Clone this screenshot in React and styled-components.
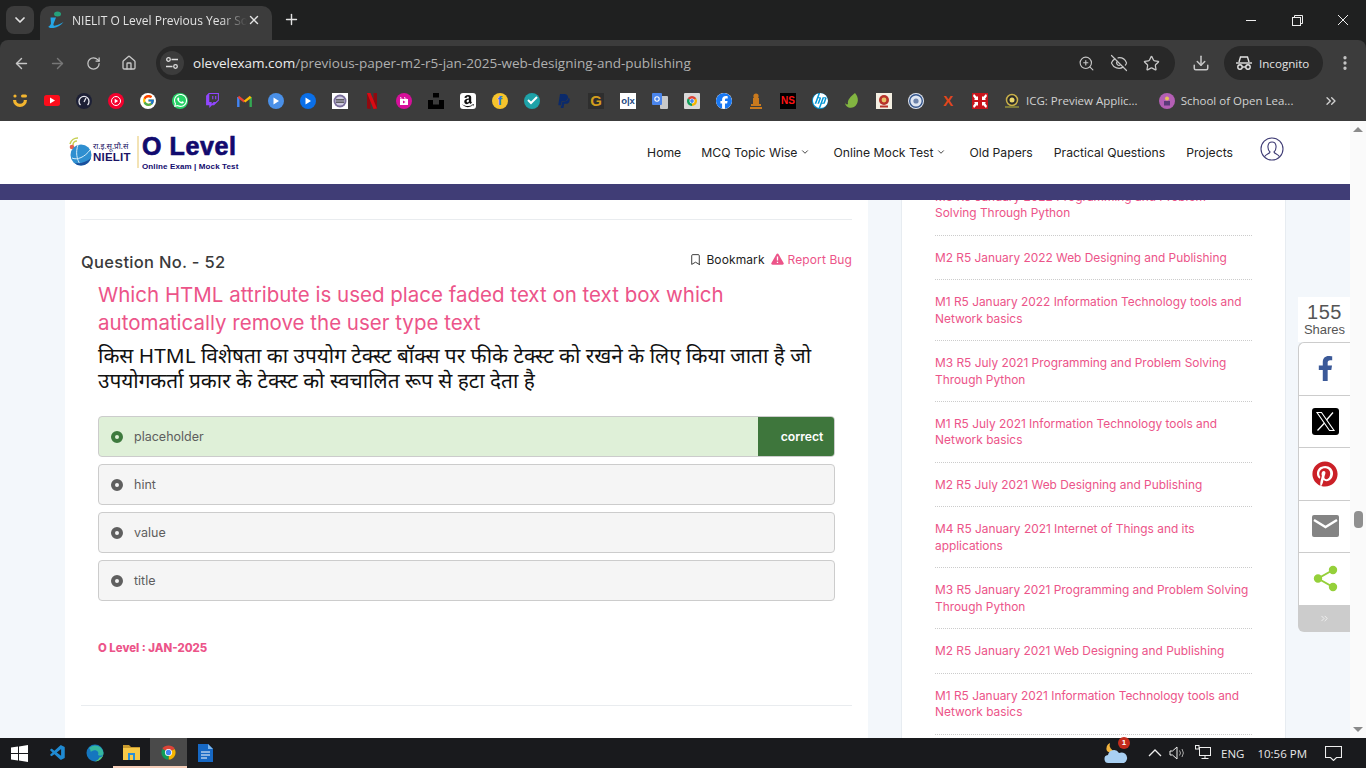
import React from 'react'
import styled, { createGlobalStyle } from 'styled-components'
import {
  ArrowLeft, ArrowRight, RotateCw, House, ZoomIn, EyeOff, Star, Download,
  EllipsisVertical, ChevronDown, X, Plus, ChevronsRight, Bookmark,
} from 'lucide-react'
import { FaWhatsapp, FaFacebookF, FaPinterest, FaAmazon } from 'react-icons/fa'
import { FcGoogle } from 'react-icons/fc'
import { SiTwitch, SiPaypal, SiHp, SiFacebook } from 'react-icons/si'
import { VscVscode } from 'react-icons/vsc'

const UI = '"Open Sans", "Liberation Sans", sans-serif'
const SITE = 'Inter, "Noto Sans", sans-serif'
const HINDI = '"Noto Sans Devanagari", "Lohit Devanagari", "Noto Sans", sans-serif'
const PINK = '#ec5489'

const Global = createGlobalStyle`
  html, body { margin: 0; height: 100%; overflow: hidden; background: #1f2020; }
  * { box-sizing: border-box; }
`

const Shell = styled.div`
  width: 1366px;
  height: 768px;
  display: flex;
  flex-direction: column;
  overflow: hidden;
  font-family: ${UI};
`

/* browser chrome */
const TabStrip = styled.div`
  height: 40px;
  flex: none;
  display: flex;
  align-items: flex-end;
  padding-left: 6px;
  background: #1f2020;
  color: #e3e3e3;
`
const TabSearch = styled.div`
  width: 28px;
  height: 28px;
  margin: 0 6px 6px 0;
  display: flex;
  align-items: center;
  justify-content: center;
  background: #3c3c3c;
  border-radius: 8px;
`
const Tab = styled.div`
  width: 232px;
  height: 34px;
  display: flex;
  align-items: center;
  padding: 0 11px 6px 7px;
  background: #3c3c3c;
  border-radius: 10px 10px 0 0;
  font-size: 12px;
`
const TabTitle = styled.span`
  flex: 1;
  margin-left: 7px;
  white-space: nowrap;
  overflow: hidden;
  -webkit-mask-image: linear-gradient(90deg, #000 85%, transparent);
  mask-image: linear-gradient(90deg, #000 85%, transparent);
`
const NewTab = styled.div`
  margin: 0 0 12px 11px;
  display: flex;
`
const WindowButtons = styled.div`
  margin-left: auto;
  height: 40px;
  display: flex;
  align-items: center;
`
const WinButton = styled.div`
  width: 46px;
  display: flex;
  justify-content: center;
`
const Toolbar = styled.div`
  height: 44px;
  flex: none;
  display: flex;
  align-items: center;
  padding: 2px 0 0 11px;
  background: #3c3c3c;
  border-radius: 8px 8px 0 0;
  color: #c7c7c7;
`
const ToolIcon = styled.div`
  width: 20px;
  height: 20px;
  margin-left: ${(p) => p.$left ?? 0}px;
  margin-right: ${(p) => p.$gap ?? 16}px;
  display: flex;
  align-items: center;
  justify-content: center;
  color: ${(p) => p.$dim ? '#777' : '#c7c7c7'};
`
const Omnibox = styled.div`
  width: 1019px;
  height: 34px;
  margin-left: -1px;
  display: flex;
  align-items: center;
  padding: 0 15px 0 4px;
  background: #282828;
  border-radius: 17px;
`
const TuneWrap = styled.div`
  width: 24px;
  height: 24px;
  margin-right: 9px;
  display: flex;
  align-items: center;
  justify-content: center;
  background: #3c3c3c;
  border-radius: 50%;
`
const Url = styled.div`
  flex: 1;
  font-size: 13.53px;
  color: #b0b0b0;
  white-space: nowrap;
  span { color: #ececec; }
`
const OmniIcons = styled.div`
  display: flex;
  gap: 15px;
  align-items: center;
`
const IncognitoPill = styled.div`
  width: 99px;
  height: 34px;
  margin-left: 13px;
  display: flex;
  align-items: center;
  gap: 7px;
  padding-left: 12px;
  background: #282828;
  border-radius: 17px;
  font-size: 11.6px;
  color: #e3e3e3;
`
const BookmarkBar = styled.div`
  height: 37px;
  flex: none;
  display: flex;
  align-items: center;
  padding: 0 0 4px 12px;
  background: #3c3c3c;
  color: #d0d0d0;
  font-size: 11.5px;
`
const Fav = styled.div`
  width: 16px;
  height: 16px;
  flex: none;
  margin-right: ${(p) => p.$gap ?? 16}px;
  display: flex;
  align-items: center;
  justify-content: center;
  overflow: hidden;
  background: ${(p) => p.$bg || 'transparent'};
  border-radius: ${(p) => p.$r ?? 0}px;
  color: ${(p) => p.$color || '#fff'};
  font: ${(p) => p.$weight || 700} ${(p) => p.$size || 10}px "Liberation Sans", sans-serif;
`
const NamedMark = styled.span`
  white-space: nowrap;
  margin-right: ${(p) => p.$gap}px;
  color: #d2d2d2;
`
const Overflow = styled.div`
  display: flex;
  margin-left: 30px;
`

/* page */
const Viewport = styled.div`
  flex: 1;
  min-height: 0;
  display: flex;
  background: #fafafa;
`
const Page = styled.div`
  position: relative;
  width: 1350px;
  display: flex;
  flex-direction: column;
  overflow: hidden;
  background: #f3f7fb;
  font-family: ${SITE};
`
const Header = styled.header`
  height: 63px;
  flex: none;
  display: flex;
  align-items: center;
  padding: 0 66px 0 69px;
  background: #fff;
  z-index: 2;
`
const Band = styled.div`
  height: 16px;
  flex: none;
  background: #403d76;
  z-index: 2;
`
const Logo = styled.div`
  display: flex;
  align-items: center;
  margin-top: -2px;
`
const LogoSeal = styled.div`
  width: 23px;
  height: 30px;
  margin-right: 1px;
`
const LogoCaption = styled.div`
  width: 38px;
  margin: 2px 6px 0 0;
  color: #1b1464;
  font: 700 11.5px/11px "Liberation Sans", sans-serif;
  letter-spacing: 0.2px;
  white-space: nowrap;
  small {
    display: block;
    font: 400 8px/10px ${HINDI};
    letter-spacing: 0;
  }
`
const LogoRule = styled.div`
  width: 2px;
  height: 32px;
  margin-right: 3px;
  background: #f3e3b5;
`
const LogoName = styled.div`
  color: #120a6e;
  white-space: nowrap;
  b {
    display: block;
    font: 900 25px/25px "Liberation Sans", sans-serif;
    -webkit-text-stroke: 0.7px #120a6e;
    letter-spacing: 0.6px;
  }
  span {
    display: block;
    margin: 3px 0 -2px 0;
    font: 700 8px/10px "Liberation Sans", sans-serif;
    letter-spacing: 0.12px;
  }
`
const Nav = styled.nav`
  margin-left: auto;
  display: flex;
  align-items: center;
  height: 100%;
  font-size: 12.2px;
  color: #222;
`
const NavItem = styled.div`
  display: flex;
  align-items: center;
  gap: 3px;
  margin-left: ${(p) => p.$gap ?? 21}px;
  white-space: nowrap;
  margin-bottom: 1px;
`
const Avatar = styled.div`
  display: flex;
  margin: -7px 0 0 27px;
`
const Columns = styled.div`
  flex: 1;
  min-height: 0;
  display: flex;
  padding-left: 65px;
`
const Card = styled.main`
  width: 803px;
  padding: 19px 16px 0;
  background: #fff;
`
const Rule = styled.hr`
  height: 1px;
  margin: 0;
  border: 0;
  background: #e9ecef;
`
const QuestionHead = styled.div`
  display: flex;
  justify-content: space-between;
  align-items: center;
  margin-top: 30px;
  height: 24px;
`
const QuestionNo = styled.div`
  font-size: 16.5px;
  font-weight: 500;
  letter-spacing: 0.3px;
  color: #3a3a3a;
`
const Actions = styled.div`
  display: flex;
  align-items: center;
  margin-top: -6px;
  font-size: 12px;
  font-weight: 400;
  letter-spacing: 0.1px;
`
const Action = styled.div`
  display: flex;
  align-items: center;
  gap: 4px;
  margin-left: ${(p) => p.$gap || 0}px;
  color: ${(p) => p.$color};
`
const QuestionBody = styled.div`
  padding-left: 17px;
`
const QuestionEn = styled.h2`
  width: 690px;
  margin: 7px 0 0;
  font-size: 20.5px;
  font-weight: 400;
  line-height: 28px;
  color: ${PINK};
`
const QuestionHi = styled.p`
  width: 730px;
  margin: 8px 0 0;
  font: 400 20.8px/25px ${HINDI};
  color: #111;
`
const Options = styled.div`
  width: 737px;
  margin-top: 21px;
  display: flex;
  flex-direction: column;
  gap: 7px;
`
const Option = styled.div`
  height: 41px;
  display: flex;
  align-items: center;
  padding-left: 12px;
  overflow: hidden;
  background: ${(p) => p.$correct ? '#dff0d8' : '#f5f5f5'};
  border: 1px solid #ccc;
  border-radius: 4px;
  font-size: 12.5px;
  color: #5e5e5e;
`
const Radio = styled.span`
  width: 12px;
  height: 12px;
  margin-right: 11px;
  border-radius: 50%;
  border: 4px solid ${(p) => p.$correct ? '#3e7a3e' : '#5f5f5f'};
`
const Correct = styled.span`
  width: 76px;
  height: 100%;
  margin-left: auto;
  display: flex;
  align-items: center;
  justify-content: center;
  padding-left: 12px;
  background: #3e763c;
  color: #fff;
  font-size: 12.2px;
  font-weight: 600;
`
const PaperTag = styled.div`
  margin-top: 40px;
  height: 16px;
  font-size: 11.4px;
  font-weight: 800;
  color: ${PINK};
`
const BottomRule = styled(Rule)`
  margin-top: 48px;
`
const Sidebar = styled.aside`
  width: 385px;
  margin-left: 33px;
  padding: 0 33px;
  overflow: hidden;
  background: #fff;
  border: solid #e7ecf1;
  border-width: 0 1px;
`
const SideList = styled.ul`
  margin: -25px 0 0;
  padding: 0;
  list-style: none;
`
const SideItem = styled.li`
  padding: 14px 0 13.25px;
  border-bottom: 1px dotted #ccc;
  font-size: 11.9px;
  line-height: 16.3px;
  white-space: pre-line;
  color: ${PINK};
`
const ShareRail = styled.div`
  position: absolute;
  top: 176px;
  right: -1px;
  width: 53px;
`
const ShareCount = styled.div`
  height: 45px;
  padding-top: 4px;
  background: #fff;
  text-align: center;
  color: #555;
  font-family: "Liberation Sans", sans-serif;
  b {
    display: block;
    font-weight: 400;
    font-size: 20px;
    line-height: 22px;
    letter-spacing: 0.5px;
  }
  span {
    display: block;
    font-size: 13px;
    line-height: 14px;
  }
`
const ShareButton = styled.div`
  height: 53.5px;
  display: flex;
  align-items: center;
  justify-content: center;
  background: #fff;
  border: solid #ccc;
  border-width: 1px 0 1px 1px;
  margin-bottom: -1px;
  border-top-left-radius: ${(p) => p.$first ? 6 : 0}px;
  color: ${(p) => p.$color};
`
const ShareMore = styled.div`
  height: 27px;
  display: flex;
  align-items: center;
  justify-content: center;
  background: #ccc;
  border-bottom-left-radius: 6px;
  color: #f2f2f2;
`
const XTile = styled.div`
  width: 27px;
  height: 27px;
  display: flex;
  align-items: center;
  justify-content: center;
  background: #000;
  border-radius: 3px;
`
const Scrollbar = styled.div`
  width: 16px;
  position: relative;
  background: #fafafa;
`
const ScrollArrow = styled.div`
  position: absolute;
  left: 3px;
  ${(p) => p.$down ? 'bottom: 6px;' : 'top: 6px;'}
  width: 0;
  height: 0;
  border: solid transparent;
  border-width: ${(p) => p.$down ? '5px 5px 0' : '0 5px 5px'};
  border-${(p) => p.$down ? 'top' : 'bottom'}-color: #8a8a8a;
`
const ScrollThumb = styled.div`
  position: absolute;
  left: 4px;
  top: 390px;
  width: 9px;
  height: 17px;
  background: #8f8f8f;
  border-radius: 4px;
`

/* taskbar */
const Taskbar = styled.div`
  height: 30px;
  flex: none;
  display: flex;
  align-items: center;
  background: #191a1d;
  color: #e8e8e8;
  font-family: ${UI};
  font-size: 11.5px;
`
const Task = styled.div`
  width: ${(p) => p.$w || 37}px;
  height: 30px;
  display: flex;
  align-items: center;
  justify-content: center;
  background: ${(p) => p.$active ? '#4a4a4a' : 'transparent'};
  border-bottom: ${(p) => p.$open ? '2px solid #f5cdb8' : '0'};
`
const Tray = styled.div`
  margin-left: auto;
  display: flex;
  align-items: center;
  height: 30px;
  padding-right: 24px;
`
const TrayItem = styled.div`
  position: relative;
  display: flex;
  align-items: center;
  margin-right: ${(p) => p.$gap ?? 0}px;
`
const Badge = styled.span`
  position: absolute;
  top: -5px;
  right: -1px;
  width: 12px;
  height: 12px;
  border-radius: 50%;
  background: #c42b1c;
  color: #fff;
  font: 700 8px/12px "Liberation Sans", sans-serif;
  text-align: center;
`

const ChromeIcon = ({ size = 16 }) => (
  <svg width={size} height={size} viewBox="0 0 24 24">
    <path d="M12 12 3.340 7A10 10 0 0 1 20.660 7z" fill="#db4437" />
    <path d="M12 12 20.660 7A10 10 0 0 1 12 22z" fill="#f4b400" />
    <path d="M12 12V22A10 10 0 0 1 3.340 7z" fill="#0f9d58" />
    <circle cx="12" cy="12" r="5" fill="#fff" />
    <circle cx="12" cy="12" r="3.800" fill="#4285f4" />
  </svg>
)

const PlayDot = ({ color }) => (
  <Fav $bg={color} $r={8}>
    <svg width="8" height="8" viewBox="0 0 8 8"><path d="M1.500 .5 7 4 1.500 7.500z" fill="#fff" /></svg>
  </Fav>
)

const SiteLogoMark = () => (
  <svg width="18" height="18" viewBox="0 0 18 18">
    <ellipse cx="10.500" cy="3" rx="3.500" ry="2.500" fill="#26a17b" />
    <path d="M3.500 6.500h5.500L6.500 13c-.4 1.500.5 2 2 1.500 2.500-.6 5-1.800 8-3.500-2.500 3-6 5.500-10 6C3 17.300 1 16.500 1.500 15.500c1-.5 2-1.500 2.500-3z" fill="#25a5e4" />
  </svg>
)

const bookmarks = [
  <Fav key="a">
    <svg width="16" height="16" viewBox="0 0 16 16" fill="#f3b52f">
      <circle cx="3" cy="3" r="1.600" /><rect x="9" y="1.500" width="6" height="3" rx="1.500" />
      <path d="M1 7h3.200a3.800 3.800 0 0 0 7.600 0H15a7 7 0 0 1-14 0z" />
    </svg>
  </Fav>,
  <Fav key="b">
    <svg width="16" height="11" viewBox="0 0 16 11">
      <rect width="16" height="11" rx="2.500" fill="#fc0d1b" /><path d="M6 2.500 11 5.500 6 8.500z" fill="#fff" />
    </svg>
  </Fav>,
  <Fav key="c" $bg="#1d2036" $r={8}>
    <svg width="16" height="16" viewBox="0 0 16 16" fill="none" stroke="#e9e9f0" strokeWidth="1.300">
      <path d="M4.500 12a5 5 0 1 1 7 0" /><path d="M8 9l2-4" />
    </svg>
  </Fav>,
  <Fav key="d" $bg="#f5002d" $r={8}>
    <svg width="12" height="12" viewBox="0 0 12 12">
      <circle cx="6" cy="6" r="4.500" fill="none" stroke="#fff" /><path d="M4.700 3.800 8.200 6 4.700 8.200z" fill="#fff" />
    </svg>
  </Fav>,
  <Fav key="e" $bg="#fff" $r={8}><FcGoogle size={13} /></Fav>,
  <Fav key="f" $bg="#25d366" $r={8}><FaWhatsapp size={15} /></Fav>,
  <Fav key="g" $color="#9146ff"><SiTwitch size={15} /></Fav>,
  <Fav key="h">
    <svg width="15" height="12" viewBox="0 0 15 12" fill="none" strokeWidth="2.400">
      <path d="M1.300 12V2" stroke="#4285f4" /><path d="M13.700 12V2" stroke="#34a853" />
      <path d="M1.300 1.800 7.500 6.600" stroke="#ea4335" /><path d="M7.500 6.600 13.700 1.800" stroke="#fbbc04" />
    </svg>
  </Fav>,
  <PlayDot key="i" color="#4a90e8" />,
  <PlayDot key="j" color="#0a6fe8" />,
  <Fav key="k" $bg="#fff">
    <svg width="14" height="14" viewBox="0 0 14 14">
      <circle cx="7" cy="7" r="6.500" fill="#7b6f9c" /><circle cx="7" cy="7" r="4.600" fill="#cfcbe0" />
      <rect x="3" y="5.200" width="8" height="1.300" fill="#444" /><rect x="3" y="7.500" width="8" height="1.300" fill="#444" />
    </svg>
  </Fav>,
  <Fav key="l">
    <svg width="12" height="16" viewBox="0 0 12 16">
      <path d="M1 0h3.500v16L1 15.500zM7.500 0H11v15.500L7.500 16z" fill="#8f0a10" /><path d="M1 0h3.500L11 15.500 7.500 16z" fill="#d90b14" />
    </svg>
  </Fav>,
  <Fav key="m" $bg="#d6109a" $r={8}>
    <svg width="10" height="10" viewBox="0 0 10 10" fill="#fff"><path d="M1 3h8v6H1zM1 1l3 1.500H1zM5 1l3 1.500H5z" /><path d="M4 4.500 6.500 6 4 7.500z" fill="#d6109a" /></svg>
  </Fav>,
  <Fav key="n">
    <svg width="16" height="16" viewBox="0 0 16 16"><path d="M5 0h6v4.500H5zM0 7h5v4.500h6V7h5v9H0z" fill="#000" /></svg>
  </Fav>,
  <Fav key="o" $bg="#fff" $r={3} $color="#111"><FaAmazon size={14} /></Fav>,
  <Fav key="p" $bg="#f5c32c" $r={8} $color="#2874f0" $size={13}>f</Fav>,
  <Fav key="q" $bg="#1ea2a8" $r={8}>
    <svg width="11" height="9" viewBox="0 0 11 9" fill="none" stroke="#fff" strokeWidth="2"><path d="M1 4l3 3 6-6" /></svg>
  </Fav>,
  <Fav key="r" $color="#0b2a6b"><SiPaypal size={14} /></Fav>,
  <Fav key="s" $bg="#2e2e2e" $color="#d39d1d" $size={15}>G</Fav>,
  <Fav key="t" $bg="#fff" $color="#23477f" $size={9.500}>o|x</Fav>,
  <Fav key="u">
    <svg width="16" height="16" viewBox="0 0 16 16">
      <rect x="8" y="3" width="8" height="13" rx="1" fill="#c9c9c9" /><rect width="10" height="12" rx="1" fill="#4a85ec" />
      <circle cx="5" cy="6" r="2.200" fill="none" stroke="#fff" strokeWidth="1.100" />
    </svg>
  </Fav>,
  <Fav key="v" $bg="#d9d9d9" $r={1}><ChromeIcon size={12} /></Fav>,
  <Fav key="w" $color="#1877f2" $bg="#fff" $r={8}><SiFacebook size={16} /></Fav>,
  <Fav key="x">
    <svg width="12" height="16" viewBox="0 0 12 16" fill="#c9791d">
      <circle cx="6" cy="3" r="2.600" /><rect x="3" y="5" width="6" height="6" /><rect x="1" y="11" width="10" height="2" /><rect y="14" width="12" height="2" />
    </svg>
  </Fav>,
  <Fav key="y" $bg="#000" $color="#ff1414" $size={10}>NS</Fav>,
  <Fav key="z" $bg="#0096d6" $r={8}><SiHp size={15} /></Fav>,
  <Fav key="aa">
    <svg width="16" height="16" viewBox="0 0 16 16"><path d="M11 0c4 4 4 11-1 14-4 2-9 0-9-5 0 2 2 3 3 2C3 7 7 3 11 0z" fill="#82b541" /></svg>
  </Fav>,
  <Fav key="ab" $bg="#f4efe2">
    <svg width="12" height="14" viewBox="0 0 12 14"><circle cx="6" cy="6" r="5" fill="#b8322a" /><circle cx="6" cy="6" r="2.400" fill="#e9c46a" /><rect x="2" y="11.500" width="8" height="2" fill="#b8322a" /></svg>
  </Fav>,
  <Fav key="ac" $bg="#dfe6f2" $r={8}>
    <svg width="14" height="14" viewBox="0 0 14 14"><circle cx="7" cy="7" r="6.300" fill="none" stroke="#34558b" strokeWidth="1.400" /><circle cx="7" cy="7" r="2.600" fill="#6d83ab" /></svg>
  </Fav>,
  <Fav key="ad" $color="#e2461b" $size={15}>X</Fav>,
  <Fav key="ae" $bg="#c8141c">
    <svg width="14" height="14" viewBox="0 0 14 14" fill="#fff">
      <path d="M1 0l3 3 1-1v4H1l1-1-2-3zM13 0l-3 3-1-1v4h4l-1-1 2-3zM1 14l3-3 1 1V8H1l1 1-2 3zM13 14l-3-3-1 1V8h4l-1 1 2 3z" />
    </svg>
  </Fav>,
]

const sidebarItems = [
  'M3 R5 January 2022 Programming and Problem\nSolving Through Python',
  'M2 R5 January 2022 Web Designing and Publishing',
  'M1 R5 January 2022 Information Technology tools and Network basics',
  'M3 R5 July 2021 Programming and Problem Solving Through Python',
  'M1 R5 July 2021 Information Technology tools and Network basics',
  'M2 R5 July 2021 Web Designing and Publishing',
  'M4 R5 January 2021 Internet of Things and its applications',
  'M3 R5 January 2021 Programming and Problem Solving Through Python',
  'M2 R5 January 2021 Web Designing and Publishing',
  'M1 R5 January 2021 Information Technology tools and Network basics',
]

const options = ['placeholder', 'hint', 'value', 'title']

export default function App() {
  return (
    <Shell>
      <Global />
      <TabStrip>
        <TabSearch><ChevronDown size={16} strokeWidth={2.600} /></TabSearch>
        <Tab>
          <SiteLogoMark />
          <TabTitle>NIELIT O Level Previous Year Solved Paper</TabTitle>
          <X size={14} strokeWidth={2.400} />
        </Tab>
        <NewTab><Plus size={17} strokeWidth={2} /></NewTab>
        <WindowButtons>
          <WinButton>
            <svg width="11" height="11" viewBox="0 0 11 11"><path d="M0 5.500h10" stroke="#eee" /></svg>
          </WinButton>
          <WinButton>
            <svg width="11" height="11" viewBox="0 0 11 11" fill="none" stroke="#eee"><rect x=".5" y="2.500" width="8" height="8" /><path d="M2.500 2.500v-2h8v8h-2" /></svg>
          </WinButton>
          <WinButton>
            <svg width="12" height="12" viewBox="0 0 12 12"><path d="M1 1l10 10M11 1 1 11" stroke="#eee" /></svg>
          </WinButton>
        </WindowButtons>
      </TabStrip>

      <Toolbar>
        <ToolIcon><ArrowLeft size={17} /></ToolIcon>
        <ToolIcon $dim><ArrowRight size={17} /></ToolIcon>
        <ToolIcon><RotateCw size={15} /></ToolIcon>
        <ToolIcon $gap={18}><House size={16} /></ToolIcon>
        <Omnibox>
          <TuneWrap>
            <svg width="14" height="14" viewBox="0 0 14 14" fill="none" stroke="#ddd" strokeWidth="1.300">
              <circle cx="3.500" cy="3.500" r="1.800" /><path d="M6.500 3.500H13M1 10.500h6.500" /><circle cx="10.500" cy="10.500" r="1.800" />
            </svg>
          </TuneWrap>
          <Url><span>olevelexam.com</span>/previous-paper-m2-r5-jan-2025-web-designing-and-publishing</Url>
          <OmniIcons>
            <ZoomIn size={17} strokeWidth={1.600} />
            <EyeOff size={18} strokeWidth={1.600} />
            <Star size={17} strokeWidth={1.800} />
          </OmniIcons>
        </Omnibox>
        <ToolIcon $gap={0} $left={16}><Download size={18} /></ToolIcon>
        <IncognitoPill>
          <svg width="16" height="14" viewBox="0 0 16 14" fill="none" stroke="#e3e3e3" strokeWidth="1.400">
            <path d="M0 7h16" /><path d="M3 6l1.500-5h7L13 6" /><circle cx="4" cy="11" r="2.200" /><circle cx="12" cy="11" r="2.200" /><path d="M6.200 11h3.600" />
          </svg>
          Incognito
        </IncognitoPill>
        <ToolIcon $gap={0} $left={12}><EllipsisVertical size={18} strokeWidth={2.400} /></ToolIcon>
      </Toolbar>

      <BookmarkBar>
        {bookmarks}
        <Fav $gap={6}>
          <svg width="16" height="16" viewBox="0 0 16 16">
            <circle cx="8" cy="7" r="5.500" fill="#2b2b2b" stroke="#c9b04a" strokeWidth="1.500" /><circle cx="8" cy="7" r="2.500" fill="#e9d66b" /><rect x="1" y="13" width="14" height="2" fill="#7c7a3a" />
          </svg>
        </Fav>
        <NamedMark $gap={21}>ICG: Preview Applic...</NamedMark>
        <Fav $gap={6} $bg="#b45fb5" $r={8}>
          <svg width="8" height="10" viewBox="0 0 8 10"><circle cx="4" cy="2.500" r="2" fill="#e7c15a" /><rect x="1" y="5" width="6" height="4.500" fill="#5b3a78" /></svg>
        </Fav>
        <NamedMark $gap={0}>School of Open Lea...</NamedMark>
        <Overflow><ChevronsRight size={16} /></Overflow>
      </BookmarkBar>

      <Viewport>
        <Page>
          <Header>
            <Logo>
              <LogoSeal>
                <svg width="23" height="30" viewBox="0 0 23 30">
                  <path d="M1 7a8 8 0 0 1 8-6M4 8a4 4 0 0 1 4-4" fill="none" stroke="#c6cf52" strokeWidth="1.600" />
                  <circle cx="3" cy="10" r="2.300" fill="#e5604d" />
                  <circle cx="12" cy="18" r="10.500" fill="#2f8fd0" />
                  <path d="M3 21c5 2.500 13-1 18-8M9 8c-2.500 7-1.500 14 2.500 20" fill="none" stroke="#d5edf9" strokeWidth="1" />
                  <path d="M12 28.500a10.500 10.500 0 0 0 10-7.500c-4 4-11 6-16.500 5 1.800 1.700 4 2.500 6.500 2.500z" fill="#1a4f9c" />
                </svg>
              </LogoSeal>
              <LogoCaption>
                <small>रा.इ.सू.प्रौ.सं</small>
                NIELIT
              </LogoCaption>
              <LogoRule />
              <LogoName>
                <b>O Level</b>
                <span>Online Exam | Mock Test</span>
              </LogoName>
            </Logo>
            <Nav>
              <NavItem $gap={0}>Home</NavItem>
              <NavItem $gap={20}>MCQ Topic Wise <ChevronDown size={10} /></NavItem>
              <NavItem $gap={23}>Online Mock Test <ChevronDown size={10} /></NavItem>
              <NavItem $gap={23}>Old Papers</NavItem>
              <NavItem>Practical Questions</NavItem>
              <NavItem>Projects</NavItem>
              <Avatar>
                <svg width="24" height="24" viewBox="0 0 24 24" fill="none" stroke="#403d76" strokeWidth="1.100">
                  <circle cx="12" cy="12" r="11" />
                  <path d="M4.500 20c.5-3 5-3 5.500-5-3-3-3-10 2-10s5 7 2 10c.5 2 5 2 5.500 5" />
                </svg>
              </Avatar>
            </Nav>
          </Header>
          <Band />
          <Columns>
            <Card>
              <Rule />
              <QuestionHead>
                <QuestionNo>Question No. - 52</QuestionNo>
                <Actions>
                  <Action $color="#222"><Bookmark size={13} strokeWidth={1.600} /> Bookmark</Action>
                  <Action $color={PINK} $gap={6}>
                    <svg width="13" height="12" viewBox="0 0 13 12">
                      <path d="M6.500.5c.5 0 .9.3 1.100.7l5 8.800c.5.8-.1 1.800-1.100 1.800H1.500c-1 0-1.600-1-1.100-1.800l5-8.800c.2-.4.600-.7 1.100-.7z" fill={PINK} />
                      <path d="M6.500 3.500v4M6.500 8.800v1.200" stroke="#fff" strokeWidth="1.300" />
                    </svg>
                    Report Bug
                  </Action>
                </Actions>
              </QuestionHead>
              <QuestionBody>
                <QuestionEn>Which HTML attribute is used place faded text on text box which automatically remove the user type text</QuestionEn>
                <QuestionHi>किस HTML विशेषता का उपयोग टेक्स्ट बॉक्स पर फीके टेक्स्ट को रखने के लिए किया जाता है जो उपयोगकर्ता प्रकार के टेक्स्ट को स्वचालित रूप से हटा देता है</QuestionHi>
                <Options>
                  {options.map((o, i) => (
                    <Option key={o} $correct={i === 0}>
                      <Radio $correct={i === 0} />
                      {o}
                      {i === 0 && <Correct>correct</Correct>}
                    </Option>
                  ))}
                </Options>
                <PaperTag>O Level : JAN-2025</PaperTag>
              </QuestionBody>
              <BottomRule />
            </Card>
            <Sidebar>
              <SideList>
                {sidebarItems.map((t) => <SideItem key={t}>{t}</SideItem>)}
              </SideList>
            </Sidebar>
          </Columns>
          <ShareRail>
            <ShareCount><b>155</b><span>Shares</span></ShareCount>
            <ShareButton $first $color="#3b5998"><FaFacebookF size={25} /></ShareButton>
            <ShareButton>
              <XTile>
                <svg width="21" height="21" viewBox="0 0 21 21" fill="none" stroke="#fff">
                  <path d="M2 1.500h4.500L19 19.500h-4.500z" strokeWidth="1.100" /><path d="M18 1.500 11.500 9M9.500 12 2.500 19.500" strokeWidth="1.300" />
                </svg>
              </XTile>
            </ShareButton>
            <ShareButton $color="#cb2027"><FaPinterest size={26} /></ShareButton>
            <ShareButton>
              <svg width="27" height="22" viewBox="0 0 27 22">
                <rect width="27" height="22" rx="2" fill="#848484" />
                <path d="M2 5l11.500 7L25 5" fill="none" stroke="#fff" strokeWidth="2.400" />
              </svg>
            </ShareButton>
            <ShareButton>
              <svg width="25" height="27" viewBox="0 0 25 27" fill="#95d03a" stroke="#95d03a" strokeWidth="2">
                <path d="M20 5 5 13.500 20 22" fill="none" />
                <circle cx="20" cy="5" r="3.200" /><circle cx="5" cy="13.500" r="3.200" /><circle cx="20" cy="22" r="3.200" />
              </svg>
            </ShareButton>
            <ShareMore><ChevronsRight size={11} /></ShareMore>
          </ShareRail>
        </Page>
        <Scrollbar>
          <ScrollArrow />
          <ScrollThumb />
          <ScrollArrow $down />
        </Scrollbar>
      </Viewport>

      <Taskbar>
        <Task $w={39}>
          <svg width="17" height="17" viewBox="0 0 17 17" fill="#fff"><path d="M0 2.500 7 1.500v6.500H0zM8 1.400 17 0v8H8zM0 9h7v6.500L0 14.500zM8 9h9v8L8 15.600z" /></svg>
        </Task>
        <Task><VscVscode size={18} color="#1f8ad2" /></Task>
        <Task>
          <svg width="18" height="18" viewBox="0 0 18 18">
            <circle cx="9" cy="9" r="8.500" fill="#1576bf" />
            <path d="M3 4a8.500 8.500 0 0 1 14.500 5c0 2.500-3.500 3.500-5.500 2 1.500-3-1.500-5.500-4.500-4.500C5.500 7 4 9 4.500 6z" fill="#35b8a0" />
            <path d="M17.500 9.500c-.5 4-4 8-8.500 8 1.500-1 4-2 4.500-4 1.500 0 3-1 4-4z" fill="#5ed16f" />
          </svg>
        </Task>
        <Task $open>
          <svg width="17" height="16" viewBox="0 0 17 16">
            <path d="M0 1h6l2 2h9v3H0z" fill="#c99a2e" /><rect y="4" width="17" height="12" fill="#f7c948" />
            <rect x="5" y="9" width="7" height="7" fill="#2a8fd8" /><rect x="7" y="11" width="3" height="5" fill="#f7c948" />
          </svg>
        </Task>
        <Task $active $open><ChromeIcon size={17} /></Task>
        <Task>
          <svg width="15" height="18" viewBox="0 0 15 18">
            <path d="M0 0h10l5 5v13H0z" fill="#1668c4" /><path d="M10 0l5 5h-5z" fill="#7db6ec" />
            <path d="M3 8h9M3 11h9M3 14h6" stroke="#fff" strokeWidth="1" />
          </svg>
        </Task>
        <Tray>
          <TrayItem $gap={19}>
            <svg width="25" height="22" viewBox="0 0 25 22">
              <path d="M6 1a6 6 0 0 0 5 8 6 6 0 0 1-8 0 6 6 0 0 1 3-8z" fill="#f2b33d" />
              <path d="M5 21a4 4 0 0 1-1-8 6 6 0 0 1 11-2 5 5 0 0 1 5 10z" fill="#a9d0f2" />
            </svg>
            <Badge>1</Badge>
          </TrayItem>
          <TrayItem $gap={7}>
            <svg width="14" height="8" viewBox="0 0 14 8" fill="none" stroke="#eee" strokeWidth="1.300"><path d="M1 7l6-6 6 6" /></svg>
          </TrayItem>
          <TrayItem $gap={10}>
            <svg width="16" height="14" viewBox="0 0 16 14" fill="none" stroke="#eee"><path d="M1 5h2.500L8 1v12L3.500 9H1z" /><path d="M10.500 4.500a4 4 0 0 1 0 5M13 3a7 7 0 0 1 0 8" stroke="#aaa" /></svg>
          </TrayItem>
          <TrayItem $gap={10}>
            <svg width="16" height="16" viewBox="0 0 16 16" fill="none" stroke="#eee"><rect x="4.500" y="2.500" width="11" height="8" /><path d="M10 10.500v3M6.500 13.500h7" /><rect x=".5" y=".5" width="3.500" height="3.500" fill="#191a1d" /></svg>
          </TrayItem>
          <TrayItem $gap={13}>ENG</TrayItem>
          <TrayItem $gap={18}>10:56 PM</TrayItem>
          <TrayItem>
            <svg width="17" height="15" viewBox="0 0 17 15" fill="none" stroke="#eee" strokeWidth="1.100"><path d="M.5.500h16v11h-5l-3 3-3-3h-5z" /></svg>
          </TrayItem>
        </Tray>
      </Taskbar>
    </Shell>
  )
}
